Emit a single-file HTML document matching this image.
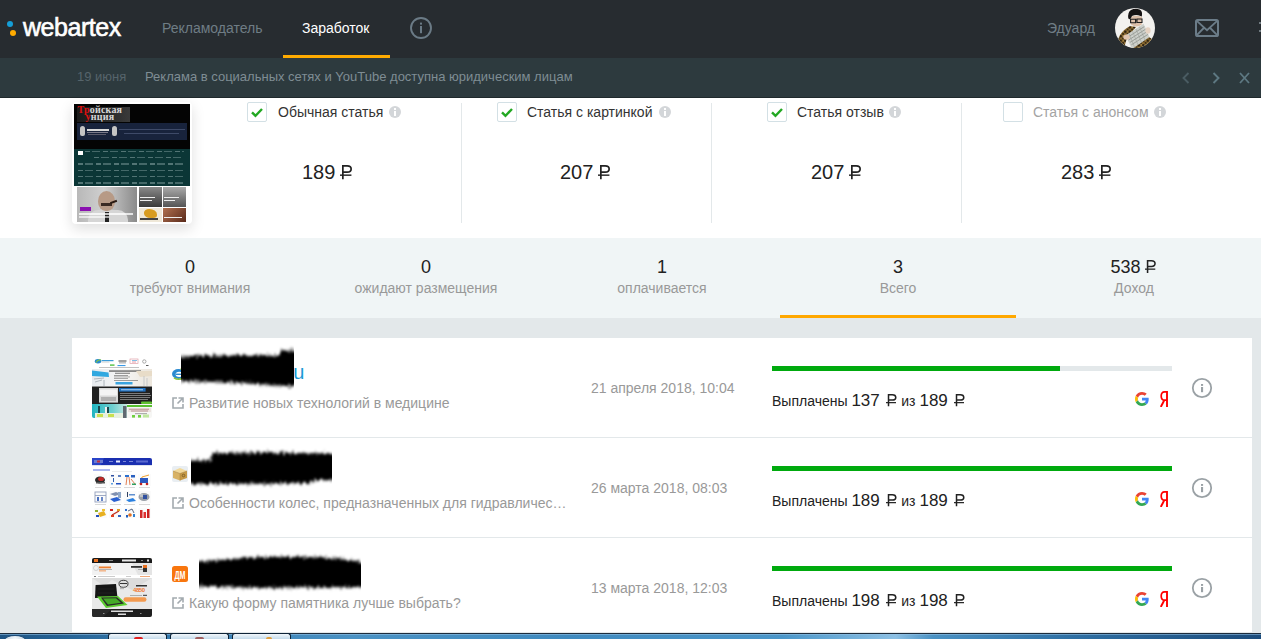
<!DOCTYPE html>
<html><head><meta charset="utf-8">
<style>
*{margin:0;padding:0;box-sizing:border-box}
html,body{width:1261px;height:639px;overflow:hidden;background:#e3e8ea;font-family:"Liberation Sans",sans-serif}
.a{position:absolute}
.t{position:absolute;white-space:nowrap}
.rub{display:inline-block;width:0.6em;height:0.716em;vertical-align:baseline;overflow:visible;margin-left:-0.03em;margin-right:0.1em}
#hdr{left:0;top:0;width:1261px;height:58px;background:#272c30}
#ntf{left:0;top:58px;width:1261px;height:40px;background:#2d3a3e;border-bottom:1px solid #1f292c}
#wht{left:0;top:98px;width:1261px;height:140px;background:#fff}
#stats{left:0;top:238px;width:1261px;height:80px;background:#f0f5f6}
.card{left:72px;width:1180px;background:#fff}
.sep{left:72px;width:1180px;height:1px;background:#e3e8ea}
.cb{position:absolute;width:20px;height:20px;border:1px solid #d3e0e5;border-radius:2px;background:#fff}
.lbl{font-size:14px;line-height:14px;color:#333}
.inf{position:absolute;width:12px;height:12px;border-radius:50%;background:#d3d6d9}
.inf::before{content:'';position:absolute;left:5px;top:2px;width:2px;height:2px;background:#fff}
.inf::after{content:'';position:absolute;left:5px;top:5px;width:2px;height:5px;background:#fff}
.price{font-size:20px;line-height:20px;color:#222}
.snum{font-size:18px;line-height:18px;color:#222;text-align:center;width:236px}
.slbl{font-size:14px;line-height:14px;color:#999;text-align:center;width:236px}
.lnk{font-size:14px;line-height:14px;color:#999}
.date{font-size:14px;line-height:14px;color:#999}
.pay{font-size:14px;line-height:14px;color:#222}
.pay b{font-weight:normal;font-size:17px}
.pay .rub{margin-left:0.08em;margin-right:0.06em;width:0.62em}
.track{position:absolute;left:772px;width:400px;height:5px;background:#e3e8ea}
.fill{position:absolute;left:0;top:0;height:5px;background:#00aa0e}
.rinf{position:absolute;width:20px;height:20px;border:2px solid #9ca3a7;border-radius:50%}
.rinf::before{content:'';position:absolute;left:7px;top:4px;width:2px;height:2px;background:#9ca3a7}
.rinf::after{content:'';position:absolute;left:7px;top:7px;width:2px;height:5px;background:#9ca3a7}
.ya{position:absolute;font-size:19px;line-height:19px;color:#f00;font-weight:normal;transform:scaleX(0.75);transform-origin:0 0}
.licon{position:absolute;width:12px;height:12px}
</style></head><body>

<!-- HEADER -->
<div id="hdr" class="a">
  <div class="a" style="left:7px;top:21px;width:6px;height:6px;border-radius:50%;background:#159fd8"></div>
  <div class="a" style="left:10px;top:30px;width:6px;height:6px;border-radius:50%;background:#ffab00"></div>
  <div class="t" style="left:23px;top:12px;font-size:25px;line-height:30px;color:#fff;letter-spacing:-0.45px;-webkit-text-stroke:0.6px #fff">webartex</div>
  <div class="t" style="left:162px;top:21px;font-size:14px;line-height:14px;color:#6f7d85">Рекламодатель</div>
  <div class="t" style="left:302px;top:21px;font-size:14px;line-height:14px;color:#fff">Заработок</div>
  <div class="a" style="left:283px;top:55px;width:107px;height:3px;background:#ffab00"></div>
  <svg class="a" style="left:409px;top:16px" width="24" height="24" viewBox="0 0 24 24"><circle cx="12" cy="12" r="10" fill="none" stroke="#6b7b86" stroke-width="1.9"/><rect x="11" y="6.6" width="2" height="2" fill="#6b7b86"/><rect x="11" y="10" width="2" height="7.2" fill="#6b7b86"/></svg>
  <div class="t" style="left:1047px;top:21px;font-size:14px;line-height:14px;color:#6f7d85">Эдуард</div>
  <svg class="a" style="left:1115px;top:8px" width="40" height="40" viewBox="0 0 40 40">
    <defs><clipPath id="av"><circle cx="20" cy="20" r="20"/></clipPath>
    <pattern id="leo" width="4.5" height="4.5" patternUnits="userSpaceOnUse"><rect width="4.5" height="4.5" fill="#8a6a30"/><circle cx="1.3" cy="1.3" r="1.2" fill="#241a0c"/><circle cx="3.6" cy="3.4" r="1" fill="#2e220e"/><circle cx="3.8" cy="0.8" r="0.5" fill="#c8a050"/></pattern></defs>
    <g clip-path="url(#av)">
      <rect width="40" height="40" fill="#f3f2ef"/>
      <path d="M1 36 L5 27 Q9 21 15 18 L21 19 L12 30 L9 40 L0 40Z" fill="url(#leo)"/>
      <path d="M23 30 L31 27 L37 31 L36 40 L18 40Z" fill="url(#leo)"/>
      <path d="M15.5 9 Q21 6.5 27 9 L26.8 16.5 Q21.5 20.5 16 16.5Z" fill="#dcbfa8"/>
      <path d="M13.3 10.5 Q12.5 4 16 2 Q20 0 24.5 1.5 Q28 3 26.8 8.5 L25.5 8 Q21 6 17 8 L15.2 11.5Z" fill="#161414"/>
      <path d="M15.6 11.3 H20.6 V14.8 H15.6Z M22 11 H27 V14.5 H22Z" fill="none" stroke="#1e1e1e" stroke-width="1.1"/>
      <path d="M20.6 12 H22" stroke="#1e1e1e" stroke-width="0.8"/>
      <path d="M10.5 27.5 L28.5 15.8 L34.5 29 L17 41Z" fill="#cdd0cb"/>
      <path d="M12.2 29.6 L29.3 18.6 M13.6 32 L30.6 21.2 M15 34.4 L31.8 23.8 M16.4 36.8 L33 26.4" stroke="#8e928c" stroke-width="0.8"/>
      <path d="M14 25.5 L19.5 39 M17.5 23.2 L23 37 M21 21 L26.5 34.5 M24.5 18.8 L30 32" stroke="#9ea29c" stroke-width="0.6"/>
      <ellipse cx="11.5" cy="29" rx="3.2" ry="2.6" fill="#dfc4ae"/>
      <ellipse cx="33" cy="22.5" rx="2.6" ry="3.2" fill="#e6d2c2"/>
    </g>
  </svg>
  <svg class="a" style="left:1195px;top:19px" width="24" height="18" viewBox="0 0 24 18"><rect x="1" y="1" width="22" height="16" rx="1.6" fill="none" stroke="#6b7c88" stroke-width="2"/><path d="M1.8 1.8 L12 11.2 L22.2 1.8 M1.8 16.2 L8.8 9 M22.2 16.2 L15.2 9" fill="none" stroke="#6b7c88" stroke-width="1.8"/></svg>
  <div class="a" style="left:1259px;top:22px;width:2px;height:2px;background:#8a959b;border-radius:1px"></div>
  <div class="a" style="left:1259px;top:30px;width:2px;height:2px;background:#8a959b;border-radius:1px"></div>
</div>

<!-- NOTIFICATION -->
<div id="ntf" class="a">
  <div class="t" style="left:77px;top:12px;font-size:13px;line-height:13px;color:#56646b">19 июня</div>
  <div class="t" style="left:145px;top:12px;font-size:13px;line-height:13px;color:#7f8d94">Реклама в социальных сетях и YouTube доступна юридическим лицам</div>
  <svg class="a" style="left:1180px;top:13px" width="74" height="14" viewBox="0 0 74 14">
    <path d="M8.5 2 L3.5 7 L8.5 12" fill="none" stroke="#4a5c63" stroke-width="1.9"/>
    <path d="M33.5 2 L38.5 7 L33.5 12" fill="none" stroke="#5d7882" stroke-width="1.9"/>
    <path d="M60 2 L69 12 M69 2 L60 12" fill="none" stroke="#5d7882" stroke-width="1.8"/>
  </svg>
</div>

<!-- WHITE SECTION -->
<div id="wht" class="a"></div>
<div class="a" style="left:72px;top:102px;width:120px;height:122px;background:#fff;border-radius:4px;box-shadow:0 5px 14px rgba(0,0,0,0.13)"></div>
<div class="a" style="left:74px;top:104px;width:116px;height:118px;background:#fff;overflow:hidden">
  <div class="a" style="left:0;top:0;width:116px;height:45px;background:#040404"></div>
  <div class="a" style="left:3px;top:2.8px;width:52.5px;height:15.2px;background:linear-gradient(90deg,#1a1a1a,#2a2a2a 60%,#3a3a3a)"></div>
  <div class="t" style="left:3.5px;top:3.2px;font-size:10px;line-height:6.6px;color:#d8d8d8;font-weight:bold;letter-spacing:0.2px;font-family:'Liberation Serif',serif"><span style="color:#e01010">Тр</span>ойская<br>&nbsp;&nbsp;&nbsp;<span style="color:#e01010">у</span>нция</div>
  <div class="a" style="left:3.2px;top:18.5px;width:109.6px;height:17.5px;background:#18233c"></div>
  <div class="a" style="left:6px;top:22.3px;width:5px;height:9.5px;background:#c4c4c4;border-radius:2.5px 2.5px 2px 2px"></div>
  <div class="a" style="left:12.5px;top:24.5px;width:22px;height:2px;background:#d8d8d8"></div>
  <div class="a" style="left:13px;top:27.5px;width:21px;height:0.8px;background:#7a7a8a"></div>
  <div class="a" style="left:14px;top:29.5px;width:18px;height:0.8px;background:#5a5a6a"></div>
  <div class="a" style="left:37.5px;top:22.3px;width:5px;height:9.5px;background:#c4c4c4;border-radius:2.5px 2.5px 2px 2px"></div>
  <div class="a" style="left:45px;top:24.5px;width:66px;height:1px;background:#3e4a68"></div>
  <div class="a" style="left:50px;top:28.5px;width:55px;height:1px;background:#3e4a68"></div>
  <div class="a" style="left:0;top:45px;width:116px;height:37px;background:#0b3636"></div>
  <div class="a" style="left:4px;top:46.5px;width:5px;height:4px;background:#fff"></div>
  <div class="a" style="left:11px;top:46.5px;width:99px;height:1.3px;background:repeating-linear-gradient(90deg,rgba(200,220,220,0.38) 0 5px,transparent 5px 7px,rgba(200,220,220,0.3) 7px 15px,transparent 15px 18px,transparent 15px 18px)"></div><div class="a" style="left:20px;top:53.0px;width:90px;height:1.3px;background:repeating-linear-gradient(90deg,rgba(200,220,220,0.38) 0 5px,transparent 5px 7px,rgba(200,220,220,0.3) 7px 15px,transparent 15px 18px,transparent 15px 18px)"></div><div class="a" style="left:4px;top:59.4px;width:106px;height:1.3px;background:repeating-linear-gradient(90deg,rgba(200,220,220,0.38) 0 5px,transparent 5px 7px,rgba(200,220,220,0.3) 7px 15px,transparent 15px 18px,transparent 15px 18px)"></div><div class="a" style="left:4px;top:65.8px;width:106px;height:1.3px;background:repeating-linear-gradient(90deg,rgba(200,220,220,0.38) 0 5px,transparent 5px 7px,rgba(200,220,220,0.3) 7px 15px,transparent 15px 18px,transparent 15px 18px)"></div><div class="a" style="left:4px;top:72.2px;width:106px;height:1.3px;background:repeating-linear-gradient(90deg,rgba(200,220,220,0.38) 0 5px,transparent 5px 7px,rgba(200,220,220,0.3) 7px 15px,transparent 15px 18px,transparent 15px 18px)"></div><div class="a" style="left:4px;top:78.4px;width:106px;height:1.3px;background:repeating-linear-gradient(90deg,rgba(200,220,220,0.38) 0 5px,transparent 5px 7px,rgba(200,220,220,0.3) 7px 15px,transparent 15px 18px,transparent 15px 18px)"></div>
  <div class="a" style="left:0;top:82px;width:116px;height:36px;background:#fff"></div>
  <div class="a" style="left:3px;top:83px;width:60px;height:35px;background:linear-gradient(90deg,#b8b8b8,#d0d0d0 45%,#8a8a8a)"></div>
  <div class="a" style="left:14px;top:106px;width:40px;height:12px;background:#d6d6d6;border-radius:10px 10px 0 0"></div>
  <div class="a" style="left:24px;top:87px;width:17px;height:20px;border-radius:50% 50% 45% 45%;background:#b79a86"></div>
  <div class="a" style="left:27px;top:99px;width:11px;height:3px;background:#3a2a22"></div>
  <div class="a" style="left:36px;top:97px;width:7px;height:1.5px;background:#2a1a12;transform:rotate(-20deg)"></div>
  <div class="a" style="left:31px;top:108px;width:4px;height:10px;background:#222"></div>
  <div class="a" style="left:6px;top:103px;width:11px;height:3.5px;background:#8a10b0"></div>
  <div class="a" style="left:5px;top:108.5px;width:54px;height:2px;background:rgba(255,255,255,0.75)"></div>
  <div class="a" style="left:5px;top:112px;width:30px;height:1.5px;background:rgba(255,255,255,0.6)"></div>
  <div class="a" style="left:65px;top:83px;width:23px;height:19.5px;background:linear-gradient(180deg,#8a8a8a,#3a3a3a)"></div>
  <div class="a" style="left:66px;top:93px;width:15px;height:1.2px;background:#eee"></div>
  <div class="a" style="left:66px;top:96px;width:12px;height:1.2px;background:#eee"></div>
  <div class="a" style="left:89px;top:83px;width:23px;height:19.5px;background:linear-gradient(180deg,#aaa,#555)"></div>
  <div class="a" style="left:90px;top:93px;width:15px;height:1.2px;background:#eee"></div>
  <div class="a" style="left:90px;top:96px;width:11px;height:1.2px;background:#eee"></div>
  <div class="a" style="left:65px;top:104px;width:23px;height:14px;background:#efe8d8"></div>
  <div class="a" style="left:70px;top:105px;width:13px;height:9px;background:#d89c20;border-radius:40% 60% 30% 50%"></div>
  <div class="a" style="left:66px;top:114px;width:18px;height:2px;background:#444"></div>
  <div class="a" style="left:89px;top:104px;width:23px;height:14px;background:linear-gradient(135deg,#b07050,#5a2a1a)"></div>
  <div class="a" style="left:90px;top:113px;width:18px;height:1.2px;background:#eee"></div>
</div>

<div class="a" style="left:461px;top:103px;width:1px;height:120px;background:#e3e8ea"></div>
<div class="a" style="left:711px;top:103px;width:1px;height:120px;background:#e3e8ea"></div>
<div class="a" style="left:961px;top:103px;width:1px;height:120px;background:#e3e8ea"></div>

<div class="cb" style="left:247px;top:102px"></div>
<svg class="a" style="left:247px;top:102px" width="20" height="20" viewBox="0 0 20 20"><path d="M5 10.3 L8.5 13.8 L15 7" fill="none" stroke="#22a822" stroke-width="2.4"/></svg>
<div class="t lbl" style="left:278px;top:105px;color:#333">Обычная статья</div>
<div class="inf" style="left:389px;top:106px"></div>
<div class="t price" style="left:302px;top:162px">189 <svg class="rub" viewBox="0 0 84 100" preserveAspectRatio="none"><path d="M20 0 V100 M20 6 H50 Q78 6 78 28 Q78 50 50 50 H20" fill="none" stroke="currentColor" stroke-width="12"/><path d="M0 71 H80" stroke="currentColor" stroke-width="10"/></svg></div>
<div class="cb" style="left:497px;top:102px"></div>
<svg class="a" style="left:497px;top:102px" width="20" height="20" viewBox="0 0 20 20"><path d="M5 10.3 L8.5 13.8 L15 7" fill="none" stroke="#22a822" stroke-width="2.4"/></svg>
<div class="t lbl" style="left:527px;top:105px;color:#333">Статья с картинкой</div>
<div class="inf" style="left:659px;top:106px"></div>
<div class="t price" style="left:560px;top:162px">207 <svg class="rub" viewBox="0 0 84 100" preserveAspectRatio="none"><path d="M20 0 V100 M20 6 H50 Q78 6 78 28 Q78 50 50 50 H20" fill="none" stroke="currentColor" stroke-width="12"/><path d="M0 71 H80" stroke="currentColor" stroke-width="10"/></svg></div>
<div class="cb" style="left:767px;top:102px"></div>
<svg class="a" style="left:767px;top:102px" width="20" height="20" viewBox="0 0 20 20"><path d="M5 10.3 L8.5 13.8 L15 7" fill="none" stroke="#22a822" stroke-width="2.4"/></svg>
<div class="t lbl" style="left:797px;top:105px;color:#333">Статья отзыв</div>
<div class="inf" style="left:889px;top:106px"></div>
<div class="t price" style="left:811px;top:162px">207 <svg class="rub" viewBox="0 0 84 100" preserveAspectRatio="none"><path d="M20 0 V100 M20 6 H50 Q78 6 78 28 Q78 50 50 50 H20" fill="none" stroke="currentColor" stroke-width="12"/><path d="M0 71 H80" stroke="currentColor" stroke-width="10"/></svg></div>
<div class="cb" style="left:1003px;top:102px"></div>
<div class="t lbl" style="left:1033px;top:105px;color:#a4a4a4">Статья с анонсом</div>
<div class="inf" style="left:1154px;top:106px"></div>
<div class="t price" style="left:1061px;top:162px">283 <svg class="rub" viewBox="0 0 84 100" preserveAspectRatio="none"><path d="M20 0 V100 M20 6 H50 Q78 6 78 28 Q78 50 50 50 H20" fill="none" stroke="currentColor" stroke-width="12"/><path d="M0 71 H80" stroke="currentColor" stroke-width="10"/></svg></div>


<!-- <div class="t snum" style="left:72px;top:258px">0</div>
<div class="t slbl" style="left:72px;top:281px">требуют внимания</div>
<div class="t snum" style="left:308px;top:258px">0</div>
<div class="t slbl" style="left:308px;top:281px">ожидают размещения</div>
<div class="t snum" style="left:544px;top:258px">1</div>
<div class="t slbl" style="left:544px;top:281px">оплачивается</div>
<div class="t snum" style="left:780px;top:258px">3</div>
<div class="t slbl" style="left:780px;top:281px">Всего</div>
<div class="t snum" style="left:1016px;top:258px">538 <svg class="rub" viewBox="0 0 84 100" preserveAspectRatio="none"><path d="M20 0 V100 M20 6 H50 Q78 6 78 28 Q78 50 50 50 H20" fill="none" stroke="currentColor" stroke-width="12"/><path d="M0 71 H80" stroke="currentColor" stroke-width="10"/></svg></div>
<div class="t slbl" style="left:1016px;top:281px">Доход</div>
 -->
<div id="stats" class="a"></div>
<div class="t snum" style="left:72px;top:258px">0</div>
<div class="t slbl" style="left:72px;top:281px">требуют внимания</div>
<div class="t snum" style="left:308px;top:258px">0</div>
<div class="t slbl" style="left:308px;top:281px">ожидают размещения</div>
<div class="t snum" style="left:544px;top:258px">1</div>
<div class="t slbl" style="left:544px;top:281px">оплачивается</div>
<div class="t snum" style="left:780px;top:258px">3</div>
<div class="t slbl" style="left:780px;top:281px">Всего</div>
<div class="t snum" style="left:1016px;top:258px">538 <svg class="rub" viewBox="0 0 84 100" preserveAspectRatio="none"><path d="M20 0 V100 M20 6 H50 Q78 6 78 28 Q78 50 50 50 H20" fill="none" stroke="currentColor" stroke-width="12"/><path d="M0 71 H80" stroke="currentColor" stroke-width="10"/></svg></div>
<div class="t slbl" style="left:1016px;top:281px">Доход</div>

<div class="a" style="left:780px;top:315px;width:236px;height:3px;background:#ffa800"></div>

<div class="a card" style="top:338px;height:294px"></div>
<div class="a sep" style="top:437px"></div>
<div class="a sep" style="top:537px"></div>
<svg class="a" style="left:92px;top:358px" width="60" height="60" viewBox="0 0 60 60">
<defs><clipPath id="t1c"><rect width="60" height="60" rx="2"/></clipPath>
<linearGradient id="t1b" x1="0" x2="1"><stop offset="0" stop-color="#e6eaee"/><stop offset="0.5" stop-color="#f6f6f6"/><stop offset="1" stop-color="#ece6dc"/></linearGradient>
<linearGradient id="t1t" x1="0" x2="1"><stop offset="0" stop-color="#20b4c0"/><stop offset="0.6" stop-color="#70d0d0"/><stop offset="1" stop-color="#c8e8e0"/></linearGradient></defs>
<g clip-path="url(#t1c)">
<rect width="60" height="60" fill="#fff"/>
<ellipse cx="6" cy="3.2" rx="3.2" ry="2.2" fill="#2a8ad0"/><path d="M4 4.5 Q6 1 9 2" stroke="#7cc04a" stroke-width="1.2" fill="none"/>
<rect x="9.5" y="2" width="12" height="1.2" fill="#3a9ad8"/><rect x="9.5" y="3.8" width="8" height="0.5" fill="#aaa"/>
<rect x="18" y="6.4" width="4.5" height="1.4" fill="#50c040"/>
<rect x="26.5" y="2.5" width="8" height="1" fill="#444"/><rect x="27" y="4.5" width="7" height="0.8" fill="#888"/>
<rect x="25.5" y="7" width="8" height="1.1" fill="#3a9ae8"/>
<rect x="38" y="1" width="8" height="4.5" fill="none" stroke="#e0a0a8" stroke-width="0.7"/><rect x="40" y="2.2" width="5" height="0.8" fill="#60b0e0"/><rect x="40" y="3.6" width="4" height="0.8" fill="#e08090"/>
<circle cx="52.3" cy="3.5" r="1.7" fill="none" stroke="#888" stroke-width="0.7"/><rect x="54" y="7.2" width="2.5" height="0.8" fill="#333"/>
<rect x="7" y="9.2" width="40" height="0.6" fill="#999"/>
<rect y="11" width="60" height="17.5" fill="url(#t1b)"/>
<path d="M0 12.5 L16.5 14.5 L17 19 L0 18Z" fill="#30a8e0"/>
<path d="M2 21 L12 20 M3 24 L10 22 M12 22 V28" stroke="#a0a8b0" stroke-width="0.8"/>
<rect x="17" y="12.5" width="32" height="1.1" fill="#444"/>
<rect x="23" y="14.8" width="15" height="0.8" fill="#555"/>
<rect x="22" y="17" width="14" height="0.7" fill="#777"/><rect x="22" y="18.6" width="16" height="0.7" fill="#888"/><rect x="22" y="20.2" width="14" height="0.7" fill="#888"/><rect x="22" y="22" width="24" height="0.7" fill="#777"/>
<rect x="23.5" y="24" width="17" height="2.5" fill="#3aa4e0"/>
<path d="M44 13 L60 13 L60 18 L48 19Z" fill="#e8dcc8"/><path d="M52 18 V28 M55 20 V28" stroke="#b8bcc0" stroke-width="0.7"/>
<rect y="28.5" width="60" height="17.5" fill="#202020"/>
<rect x="7" y="30" width="19" height="14.6" fill="#d8d8d8"/><rect x="8" y="31.5" width="17" height="6" fill="#f4f4f4"/><rect x="9" y="39" width="15" height="4" fill="#b0b0b0"/>
<rect x="27" y="30" width="26.6" height="3.6" fill="#1e70c0"/><rect x="29" y="31.4" width="22" height="0.8" fill="#cfe4f8"/>
<rect x="28" y="35" width="30" height="0.6" fill="#bbb"/><rect x="28" y="37" width="31" height="0.6" fill="#bbb"/><rect x="28" y="39" width="30" height="0.6" fill="#bbb"/><rect x="28" y="41" width="28" height="0.6" fill="#bbb"/>
<rect x="49" y="43.6" width="11" height="2.4" rx="1" fill="#60c030"/>
<rect y="46" width="35" height="14" fill="url(#t1t)"/>
<rect x="6" y="48" width="2" height="10" fill="#1a4a50"/><rect x="13" y="49" width="2" height="8" fill="#f0f0f0"/><rect x="15" y="49" width="2" height="9" fill="#1a4a50"/>
<rect x="3" y="55" width="28" height="5" fill="#e8f0e0"/><rect x="5" y="56" width="6" height="3" fill="#c8e050"/><rect x="16" y="56" width="6" height="3" fill="#c8e050"/>
<rect x="31" y="48" width="3.5" height="12" fill="#606870"/>
<rect x="35" y="46" width="25" height="14" fill="#f6f6f4"/>
<rect x="35" y="47" width="25" height="2" fill="#58c030"/>
<rect x="36" y="50" width="23" height="4" fill="#ece4e0"/><rect x="37" y="50.8" width="20" height="0.8" fill="#b08080"/><rect x="39" y="52.6" width="17" height="0.8" fill="#b08080"/>
<rect x="43" y="55.5" width="12" height="0.6" fill="#666"/>
<rect x="40" y="57" width="3" height="2.6" fill="#70d040"/><rect x="46" y="57" width="3" height="2.6" fill="#70d040"/><rect x="51" y="56.5" width="6" height="3" fill="#c0e8a0"/>
</g>
</svg>
<svg class="a" style="left:92px;top:458px" width="60" height="60" viewBox="0 0 60 60">
<rect width="60" height="60" fill="#fff"/>
<path d="M0 2 Q0 0 2 0 L58 0 Q60 0 60 2 L60 7 L0 7Z" fill="#1a2fb0"/>
<path d="M12 0 L9 7 L0 7 L0 0Z" fill="#2a44c8"/>
<rect x="2" y="2" width="9" height="3" fill="#6a7ad0"/><rect x="5" y="2.5" width="3" height="2" fill="#c03040"/>
<rect x="24" y="2.5" width="4" height="2" fill="#e8ecff"/>
<rect x="17" y="3" width="4" height="1" fill="#7a88d8"/><rect x="31" y="3" width="3" height="1" fill="#7a88d8"/><rect x="37" y="3" width="4" height="1" fill="#7a88d8"/>
<rect x="44" y="2.5" width="12" height="2" fill="#5a6ad0"/>
<rect x="0" y="7" width="60" height="1" fill="#dfe3ef"/>
<rect x="1" y="11.5" width="17" height="1" fill="#5a70e0"/>
<rect x="20" y="13" width="20" height="0.6" fill="#e0e0e0"/>
<g>
<rect x="2" y="16" width="13" height="12" fill="#fbfbfb"/>
<ellipse cx="8" cy="22" rx="5" ry="3.5" fill="#2a2a2a"/><ellipse cx="9" cy="21" rx="3" ry="2" fill="#c02828"/><rect x="4" y="24" width="9" height="1.5" fill="#555"/>
<rect x="17" y="16" width="13" height="12" fill="#fbfbfb"/>
<rect x="19" y="17" width="3" height="1.5" fill="#3050a0"/><rect x="26" y="17" width="3" height="2" fill="#6080c0"/><rect x="21" y="20" width="1" height="4" fill="#3060b0"/><rect x="24" y="25" width="5" height="1.5" fill="#2050c0"/><rect x="19" y="25" width="2" height="1.5" fill="#60a0e0"/>
<rect x="31.5" y="16" width="13" height="12" fill="#fbfbfb"/>
<rect x="33" y="17" width="4" height="2" fill="#2a70d0"/><rect x="39" y="17" width="4" height="2.5" fill="#2a60c0"/><path d="M35 19 L34 27 M37 19 L38 27 M39 21 L43 26" stroke="#e07040" stroke-width="0.9"/><rect x="40" y="25.5" width="4" height="1.5" fill="#30a060"/>
<rect x="46" y="16" width="13" height="12" fill="#fbfbfb"/>
<path d="M48 26 L50 19 L57 17" stroke="#f0a030" stroke-width="1" fill="none"/><rect x="48" y="20" width="8" height="5" fill="#2a58c0"/><circle cx="49" cy="26" r="1.3" fill="#c02020"/><circle cx="55" cy="26" r="1.3" fill="#c02020"/>
<rect x="3" y="29" width="11" height="0.8" fill="#d0d0d0"/><rect x="18" y="29" width="11" height="0.8" fill="#d0d0d0"/><rect x="32" y="29" width="11" height="0.8" fill="#d0d0d0"/><rect x="47" y="29" width="11" height="0.8" fill="#d0d0d0"/>
<rect x="2" y="33" width="13" height="12" fill="#fbfbfb"/>
<rect x="3" y="34" width="11" height="10" fill="none" stroke="#8a98b8" stroke-width="0.8"/><rect x="3" y="37" width="11" height="0.8" fill="#8a98b8"/><rect x="5" y="39" width="2" height="4" fill="#4a70c0"/><rect x="9" y="39" width="2" height="4" fill="#6a88c8"/>
<rect x="17" y="33" width="13" height="12" fill="#fbfbfb"/>
<path d="M18 36 L24 34 L29 36 L23 38Z" fill="#8090b0"/><rect x="26" y="34" width="3" height="6" fill="#90a8c8"/><path d="M18 41 L25 39 L29 42 L22 44Z" fill="#2a60d0"/>
<rect x="31.5" y="33" width="13" height="12" fill="#fbfbfb"/>
<rect x="35" y="34" width="1" height="5" fill="#304060"/><rect x="37" y="36" width="6" height="1.5" fill="#6090d0"/><path d="M34 42 L41 40 L44 43 L37 44Z" fill="#2a80e0"/>
<rect x="46" y="33" width="13" height="12" fill="#fbfbfb"/>
<ellipse cx="52" cy="39" rx="5.5" ry="4" fill="#9aa0a8"/><rect x="51" y="37" width="4" height="4" fill="#3050a0"/><rect x="48" y="36" width="3" height="3" fill="#c0c4c8"/>
<rect x="3" y="46" width="11" height="0.8" fill="#d0d0d0"/><rect x="18" y="46" width="11" height="0.8" fill="#d0d0d0"/><rect x="32" y="46" width="11" height="0.8" fill="#d0d0d0"/><rect x="47" y="46" width="11" height="0.8" fill="#d0d0d0"/>
<rect x="2" y="50" width="13" height="10" fill="#fbfbfb"/>
<rect x="3" y="52" width="3" height="2" fill="#90b030"/><path d="M6 55 L12 53 L14 57 L8 59Z" fill="#e8b020"/><rect x="10" y="51" width="3" height="2" fill="#f0c030"/><rect x="4" y="57" width="3" height="2" fill="#2050c0"/>
<rect x="17" y="50" width="13" height="10" fill="#fbfbfb"/>
<rect x="18" y="51" width="3" height="2" fill="#d02020"/><path d="M20 57 L27 53" stroke="#c03020" stroke-width="1.4"/><rect x="25" y="51" width="3" height="2" fill="#e0a020"/><rect x="19" y="57" width="3" height="2" fill="#e04020"/><rect x="26" y="57" width="3" height="2" fill="#3060c0"/>
<rect x="31.5" y="50" width="13" height="10" fill="#fbfbfb"/>
<rect x="33" y="51" width="2" height="2" fill="#3070d0"/><path d="M36 53 L40 51 L42 55" stroke="#304060" stroke-width="0.8" fill="none"/><circle cx="38" cy="57" r="1.8" fill="#e07020"/><rect x="34" y="57" width="2" height="2.5" fill="#2060c0"/><rect x="41" y="56" width="2" height="3" fill="#3080d0"/>
<rect x="46" y="50" width="13" height="10" fill="#fbfbfb"/>
<rect x="48" y="52" width="2.5" height="8" fill="#d02828"/><rect x="51.5" y="54" width="2.5" height="6" fill="#e03030"/><rect x="55" y="51" width="2.5" height="9" fill="#c82020"/>
</g>
</svg>
<svg class="a" style="left:92px;top:558px" width="60" height="60" viewBox="0 0 60 60">
<defs><clipPath id="t3c"><rect width="60" height="59" rx="2"/></clipPath></defs>
<g clip-path="url(#t3c)">
<rect width="60" height="60" fill="#ececec"/>
<rect width="60" height="5" fill="#1a1a1a"/>
<rect x="2" y="1" width="4" height="3" fill="#e87020"/>
<rect x="17" y="2" width="4" height="1" fill="#888"/><rect x="30" y="1.5" width="14" height="2" fill="#e8e8e8"/><rect x="49" y="2" width="2" height="1" fill="#888"/><rect x="55" y="1.5" width="2" height="2" fill="#ddd"/>
<rect y="5" width="60" height="12" fill="#f2f2f2"/>
<path d="M40 5 L60 5 L60 17 L46 17Z" fill="#e4e4e4"/>
<circle cx="4" cy="10" r="2.5" fill="none" stroke="#bbb" stroke-width="0.6"/>
<rect x="7" y="8.5" width="12" height="1.8" fill="#f08030"/><rect x="7" y="11" width="13" height="0.7" fill="#999"/><rect x="7" y="12.5" width="7" height="0.8" fill="#f08030"/>
<rect x="39" y="8" width="11" height="1.8" fill="#333"/><rect x="46" y="11" width="5" height="0.8" fill="#999"/><rect x="51" y="7" width="4" height="3" fill="#e87020"/><rect x="51" y="10" width="4" height="4" fill="#333"/>
<rect y="17" width="60" height="3" fill="#fff"/>
<rect x="2" y="18" width="2" height="1" fill="#777"/><rect x="6" y="18.3" width="17" height="0.6" fill="#aaa"/><rect x="34" y="18.3" width="5" height="0.6" fill="#aaa"/><rect x="48" y="18.3" width="10" height="0.6" fill="#e87020"/>
<path d="M0 20 H60 V51 H0Z" fill="#e9e9e9"/>
<path d="M0 20 L12 28 L20 22 L40 32 L60 20Z" fill="#dcdcdc"/>
<path d="M3.6 27 L24 26 L25.4 39 L3 40Z" fill="#151515"/>
<path d="M6 31 H22 M6 35 H22" stroke="#2a2a2a" stroke-width="0.6"/>
<path d="M5 38.5 L26 38 L35.6 47 L14 50Z" fill="#5ccc30"/>
<path d="M9 39.5 L25 39.2 L32 45.5 L15 48Z" fill="#2a2a2a"/>
<path d="M11 40.5 L24 40.3 L29 44.8 L16 46.5Z" fill="#44aa28"/>
<ellipse cx="31.5" cy="25.8" rx="4.5" ry="3.5" fill="none" stroke="#2a2a2a" stroke-width="0.9"/>
<rect x="28" y="25" width="7" height="1" fill="#333"/>
<rect x="28" y="29" width="5" height="0.6" fill="#888"/><rect x="28" y="30.5" width="4" height="0.6" fill="#888"/>
<rect x="44" y="27" width="11" height="1.5" fill="#333"/>
<text x="41" y="34.3" font-family="Liberation Sans" font-weight="bold" font-size="6" fill="#f07a30" textLength="12">4850</text>
<rect x="38" y="37" width="12" height="0.6" fill="#888"/><rect x="51" y="36.8" width="4" height="1" fill="#333"/>
<rect x="31.5" y="39.2" width="23" height="4.5" rx="2.2" fill="#f39a50"/>
<rect y="51" width="60" height="9" fill="#1e1e1e"/>
<path d="M0 51 L20 51 L10 60 L0 60Z" fill="#2a2a2a"/>
<rect x="19" y="52.5" width="22" height="1.5" fill="#ddd"/><rect x="26" y="55.5" width="8" height="1.5" fill="#ddd"/>
<rect x="11" y="55" width="1.5" height="0.8" fill="#aaa"/><rect x="48" y="55" width="1.5" height="0.8" fill="#aaa"/>
</g>
</svg>
<svg class="a" style="left:171px;top:366px" width="18" height="16" viewBox="0 0 18 16"><ellipse cx="7.5" cy="8" rx="6.5" ry="5" fill="#2a8ad0"/><ellipse cx="8.2" cy="8.3" rx="3.6" ry="2.6" fill="#fff"/><rect x="4.5" y="7.6" width="8" height="1.4" fill="#2a8ad0"/><path d="M3 11.8 Q7 14.5 12.5 12" stroke="#8cc43c" stroke-width="1.5" fill="none"/><path d="M9.5 3.2 Q12.5 2.5 13.5 6" stroke="#a8d030" stroke-width="1.6" fill="none"/></svg>
<svg class="a" style="left:172px;top:466px" width="16" height="16" viewBox="0 0 16 16"><rect x="0" y="0" width="16" height="16" rx="2" fill="#e9eef2"/><path d="M1 5 L8 2 L15 5 L8 7.5Z" fill="#f2d99a"/><path d="M1 5 L8 7.5 L8 14.5 L1 12Z" fill="#d8b265"/><path d="M8 7.5 L15 5 L15 12 L8 14.5Z" fill="#c69a48"/><path d="M1 5 L8 7.5 L15 5 M8 7.5 V14.5" fill="none" stroke="#a88038" stroke-width="0.5"/><circle cx="11.5" cy="9.5" r="1.3" fill="none" stroke="#6a5020" stroke-width="0.7"/></svg>
<svg class="a" style="left:172px;top:566px" width="16" height="16" viewBox="0 0 16 16"><rect width="16" height="16" rx="2.5" fill="#f8760e"/><text x="8" y="12.6" text-anchor="middle" font-family="Liberation Sans" font-weight="bold" font-size="11" fill="#fff" textLength="11" lengthAdjust="spacingAndGlyphs">ДМ</text></svg>
<div class="t" style="left:281px;top:362px;font-size:20px;line-height:20px;color:#1a9ad6">.ru</div>
<svg class="a" style="left:181px;top:344px" width="113" height="50" viewBox="0 0 113 50"><defs><filter id="f3" x="-20%" y="-50%" width="140%" height="200%"><feTurbulence type="fractalNoise" baseFrequency="0.3 0.8" numOctaves="4" seed="3" result="n"/><feDisplacementMap in="SourceGraphic" in2="n" scale="8" xChannelSelector="R" yChannelSelector="G" result="d"/><feGaussianBlur in="d" stdDeviation="1 1.6"/></filter></defs><g filter="url(#f3)" transform="translate(-181 -344)"><path d="M170 357 Q220 355 280 355 L281 351 L300 350 L300 386 L283 386 Q230 381 170 381Z" fill="#000"/></g></svg>
<svg class="a" style="left:191px;top:444px" width="141" height="48" viewBox="0 0 141 48"><defs><filter id="f7" x="-20%" y="-50%" width="140%" height="200%"><feTurbulence type="fractalNoise" baseFrequency="0.3 0.8" numOctaves="4" seed="7" result="n"/><feDisplacementMap in="SourceGraphic" in2="n" scale="8" xChannelSelector="R" yChannelSelector="G" result="d"/><feGaussianBlur in="d" stdDeviation="1 1.6"/></filter></defs><g filter="url(#f7)" transform="translate(-191 -444)"><path d="M180 461 L211 460 L212 453 Q270 452 340 454 L340 480 L314 480 L314 483 Q270 484 212 484 L180 484Z" fill="#000"/></g></svg>
<svg class="a" style="left:199px;top:547px" width="162" height="49" viewBox="0 0 162 49"><defs><filter id="f11" x="-20%" y="-50%" width="140%" height="200%"><feTurbulence type="fractalNoise" baseFrequency="0.3 0.8" numOctaves="4" seed="11" result="n"/><feDisplacementMap in="SourceGraphic" in2="n" scale="8" xChannelSelector="R" yChannelSelector="G" result="d"/><feGaussianBlur in="d" stdDeviation="1 1.6"/></filter></defs><g filter="url(#f11)" transform="translate(-199 -547)"><path d="M190 562 Q230 559 260 557 Q300 556 330 558 Q350 560 370 563 L370 587 Q300 587 260 588 Q220 587 190 586Z" fill="#000"/></g></svg><svg class="a" style="left:172px;top:397px" width="12" height="12" viewBox="0 0 12 12"><path d="M5 1 H1 V11 H11 V7" fill="none" stroke="#a3aaaf" stroke-width="1.6"/><path d="M5.5 6.5 L10.5 1.5 M6.5 1 H11 V5.5" fill="none" stroke="#a3aaaf" stroke-width="1.6"/></svg>
<div class="t lnk" style="left:189px;top:396px">Развитие новых технологий в медицине</div>
<div class="t date" style="left:591px;top:381px">21 апреля 2018, 10:04</div>
<div class="track" style="top:366px"><div class="fill" style="width:288px"></div></div>
<div class="t pay" style="left:772px;top:394px">Выплачены <b>137 <svg class="rub" viewBox="0 0 84 100" preserveAspectRatio="none"><path d="M20 0 V100 M20 6 H50 Q78 6 78 28 Q78 50 50 50 H20" fill="none" stroke="currentColor" stroke-width="12"/><path d="M0 71 H80" stroke="currentColor" stroke-width="10"/></svg></b> из <b>189 <svg class="rub" viewBox="0 0 84 100" preserveAspectRatio="none"><path d="M20 0 V100 M20 6 H50 Q78 6 78 28 Q78 50 50 50 H20" fill="none" stroke="currentColor" stroke-width="12"/><path d="M0 71 H80" stroke="currentColor" stroke-width="10"/></svg></b></div>
<svg class="a" style="left:1135px;top:392px" width="14" height="14" viewBox="0 0 48 48"><path fill="#EA4335" d="M24 9.5c3.54 0 6.71 1.22 9.21 3.6l6.85-6.85C35.9 2.38 30.47 0 24 0 14.62 0 6.51 5.38 2.56 13.22l7.98 6.19C12.43 13.72 17.74 9.5 24 9.5z"/><path fill="#4285F4" d="M46.98 24.55c0-1.57-.15-3.09-.38-4.55H24v9.02h12.94c-.58 2.960-2.26 5.48-4.780 7.18l7.73 6c4.51-4.18 7.09-10.36 7.09-17.65z"/><path fill="#FBBC05" d="M10.53 28.59c-.48-1.45-.76-2.99-.76-4.59s.27-3.14.76-4.59l-7.98-6.19C.92 16.46 0 20.12 0 24c0 3.88.92 7.54 2.56 10.78l7.97-6.19z"/><path fill="#34A853" d="M24 48c6.48 0 11.93-2.13 15.89-5.810l-7.73-6c-2.15 1.45-4.92 2.3-8.16 2.3-6.26 0-11.57-4.22-13.47-9.910l-7.98 6.19C6.51 42.62 14.62 48 24 48z"/></svg>
<svg class="a" style="left:1159px;top:391px" width="10" height="16" viewBox="0 0 10 16"><path d="M8 0 V16" stroke="#f00" stroke-width="1.9" fill="none"/><path d="M8 0.9 H5.6 Q2.2 0.9 2.2 5 Q2.2 9.2 5.6 9.2 H8" fill="none" stroke="#f00" stroke-width="1.7"/><path d="M5.2 9.4 L1.8 15.9" stroke="#f00" stroke-width="2" fill="none"/></svg>
<svg class="a" style="left:1191px;top:377px" width="22" height="22" viewBox="0 0 22 22"><circle cx="11" cy="11" r="9.2" fill="none" stroke="#9aa1a5" stroke-width="1.8"/><rect x="10" y="7" width="2.1" height="1.9" fill="#9aa1a5"/><rect x="10" y="10" width="2.1" height="5.2" fill="#9aa1a5"/></svg>
<svg class="a" style="left:172px;top:497px" width="12" height="12" viewBox="0 0 12 12"><path d="M5 1 H1 V11 H11 V7" fill="none" stroke="#a3aaaf" stroke-width="1.6"/><path d="M5.5 6.5 L10.5 1.5 M6.5 1 H11 V5.5" fill="none" stroke="#a3aaaf" stroke-width="1.6"/></svg>
<div class="t lnk" style="left:189px;top:496px">Особенности колес, предназначенных для гидравличес…</div>
<div class="t date" style="left:591px;top:481px">26 марта 2018, 08:03</div>
<div class="track" style="top:466px"><div class="fill" style="width:400px"></div></div>
<div class="t pay" style="left:772px;top:494px">Выплачены <b>189 <svg class="rub" viewBox="0 0 84 100" preserveAspectRatio="none"><path d="M20 0 V100 M20 6 H50 Q78 6 78 28 Q78 50 50 50 H20" fill="none" stroke="currentColor" stroke-width="12"/><path d="M0 71 H80" stroke="currentColor" stroke-width="10"/></svg></b> из <b>189 <svg class="rub" viewBox="0 0 84 100" preserveAspectRatio="none"><path d="M20 0 V100 M20 6 H50 Q78 6 78 28 Q78 50 50 50 H20" fill="none" stroke="currentColor" stroke-width="12"/><path d="M0 71 H80" stroke="currentColor" stroke-width="10"/></svg></b></div>
<svg class="a" style="left:1135px;top:492px" width="14" height="14" viewBox="0 0 48 48"><path fill="#EA4335" d="M24 9.5c3.54 0 6.71 1.22 9.21 3.6l6.85-6.85C35.9 2.38 30.47 0 24 0 14.62 0 6.51 5.38 2.56 13.22l7.98 6.19C12.43 13.72 17.74 9.5 24 9.5z"/><path fill="#4285F4" d="M46.98 24.55c0-1.57-.15-3.09-.38-4.55H24v9.02h12.94c-.58 2.960-2.26 5.48-4.780 7.18l7.73 6c4.51-4.18 7.09-10.36 7.09-17.65z"/><path fill="#FBBC05" d="M10.53 28.59c-.48-1.45-.76-2.99-.76-4.59s.27-3.14.76-4.59l-7.98-6.19C.92 16.46 0 20.12 0 24c0 3.88.92 7.54 2.56 10.78l7.97-6.19z"/><path fill="#34A853" d="M24 48c6.48 0 11.93-2.13 15.89-5.810l-7.73-6c-2.15 1.45-4.92 2.3-8.16 2.3-6.26 0-11.57-4.22-13.47-9.910l-7.98 6.19C6.51 42.62 14.62 48 24 48z"/></svg>
<svg class="a" style="left:1159px;top:491px" width="10" height="16" viewBox="0 0 10 16"><path d="M8 0 V16" stroke="#f00" stroke-width="1.9" fill="none"/><path d="M8 0.9 H5.6 Q2.2 0.9 2.2 5 Q2.2 9.2 5.6 9.2 H8" fill="none" stroke="#f00" stroke-width="1.7"/><path d="M5.2 9.4 L1.8 15.9" stroke="#f00" stroke-width="2" fill="none"/></svg>
<svg class="a" style="left:1191px;top:477px" width="22" height="22" viewBox="0 0 22 22"><circle cx="11" cy="11" r="9.2" fill="none" stroke="#9aa1a5" stroke-width="1.8"/><rect x="10" y="7" width="2.1" height="1.9" fill="#9aa1a5"/><rect x="10" y="10" width="2.1" height="5.2" fill="#9aa1a5"/></svg>
<svg class="a" style="left:172px;top:597px" width="12" height="12" viewBox="0 0 12 12"><path d="M5 1 H1 V11 H11 V7" fill="none" stroke="#a3aaaf" stroke-width="1.6"/><path d="M5.5 6.5 L10.5 1.5 M6.5 1 H11 V5.5" fill="none" stroke="#a3aaaf" stroke-width="1.6"/></svg>
<div class="t lnk" style="left:189px;top:596px">Какую форму памятника лучше выбрать?</div>
<div class="t date" style="left:591px;top:581px">13 марта 2018, 12:03</div>
<div class="track" style="top:566px"><div class="fill" style="width:400px"></div></div>
<div class="t pay" style="left:772px;top:594px">Выплачены <b>198 <svg class="rub" viewBox="0 0 84 100" preserveAspectRatio="none"><path d="M20 0 V100 M20 6 H50 Q78 6 78 28 Q78 50 50 50 H20" fill="none" stroke="currentColor" stroke-width="12"/><path d="M0 71 H80" stroke="currentColor" stroke-width="10"/></svg></b> из <b>198 <svg class="rub" viewBox="0 0 84 100" preserveAspectRatio="none"><path d="M20 0 V100 M20 6 H50 Q78 6 78 28 Q78 50 50 50 H20" fill="none" stroke="currentColor" stroke-width="12"/><path d="M0 71 H80" stroke="currentColor" stroke-width="10"/></svg></b></div>
<svg class="a" style="left:1135px;top:592px" width="14" height="14" viewBox="0 0 48 48"><path fill="#EA4335" d="M24 9.5c3.54 0 6.71 1.22 9.21 3.6l6.85-6.85C35.9 2.38 30.47 0 24 0 14.62 0 6.51 5.38 2.56 13.22l7.98 6.19C12.43 13.72 17.74 9.5 24 9.5z"/><path fill="#4285F4" d="M46.98 24.55c0-1.57-.15-3.09-.38-4.55H24v9.02h12.94c-.58 2.960-2.26 5.48-4.780 7.18l7.73 6c4.51-4.18 7.09-10.36 7.09-17.65z"/><path fill="#FBBC05" d="M10.53 28.59c-.48-1.45-.76-2.99-.76-4.59s.27-3.14.76-4.59l-7.98-6.19C.92 16.46 0 20.12 0 24c0 3.88.92 7.54 2.56 10.78l7.97-6.19z"/><path fill="#34A853" d="M24 48c6.48 0 11.93-2.13 15.89-5.810l-7.73-6c-2.15 1.45-4.92 2.3-8.16 2.3-6.26 0-11.57-4.22-13.47-9.910l-7.98 6.19C6.51 42.62 14.62 48 24 48z"/></svg>
<svg class="a" style="left:1159px;top:591px" width="10" height="16" viewBox="0 0 10 16"><path d="M8 0 V16" stroke="#f00" stroke-width="1.9" fill="none"/><path d="M8 0.9 H5.6 Q2.2 0.9 2.2 5 Q2.2 9.2 5.6 9.2 H8" fill="none" stroke="#f00" stroke-width="1.7"/><path d="M5.2 9.4 L1.8 15.9" stroke="#f00" stroke-width="2" fill="none"/></svg>
<svg class="a" style="left:1191px;top:577px" width="22" height="22" viewBox="0 0 22 22"><circle cx="11" cy="11" r="9.2" fill="none" stroke="#9aa1a5" stroke-width="1.8"/><rect x="10" y="7" width="2.1" height="1.9" fill="#9aa1a5"/><rect x="10" y="10" width="2.1" height="5.2" fill="#9aa1a5"/></svg>


<!-- TASKBAR -->
<div class="a" style="left:0;top:633px;width:1261px;height:6px;background:linear-gradient(90deg,#1d5484 0%,#3479ad 12%,#4a92c4 28%,#3f8abf 45%,#4a96c9 62%,#8cc0e4 71%,#4a92c4 74%,#2f70a4 85%,#1c4c7c 100%);border-top:1px solid #1c2c3c"></div>
<div class="a" style="left:0;top:634px;width:1261px;height:1px;background:rgba(150,195,230,0.55)"></div>
<div class="a" style="left:4px;top:635px;width:22px;height:10px;border-radius:50%;background:radial-gradient(ellipse at 50% 30%,#f4f8fb,#b8ccdc);border:1px solid #1c4c78"></div>
<div class="a" style="left:108px;top:633px;width:59px;height:6px;background:linear-gradient(180deg,#f2f7fb,#c4dbeb);border:1px solid #0f2438;border-bottom:none;border-radius:3px 3px 0 0"></div>
<div class="a" style="left:170px;top:633px;width:59px;height:6px;background:linear-gradient(180deg,#f2f7fb,#c4dbeb);border:1px solid #0f2438;border-bottom:none;border-radius:3px 3px 0 0"></div>
<div class="a" style="left:232px;top:633px;width:59px;height:6px;background:linear-gradient(180deg,#f2f7fb,#c4dbeb);border:1px solid #0f2438;border-bottom:none;border-radius:3px 3px 0 0"></div>
<div class="a" style="left:134px;top:637px;width:9px;height:2px;border-radius:4px 4px 0 0;background:#e02020"></div>
<div class="a" style="left:195px;top:637px;width:9px;height:2px;border-radius:4px 4px 0 0;background:#a06060"></div>
<div class="a" style="left:266px;top:637px;width:6px;height:2px;border-radius:4px 4px 0 0;background:#e0a040"></div>
</body></html>
